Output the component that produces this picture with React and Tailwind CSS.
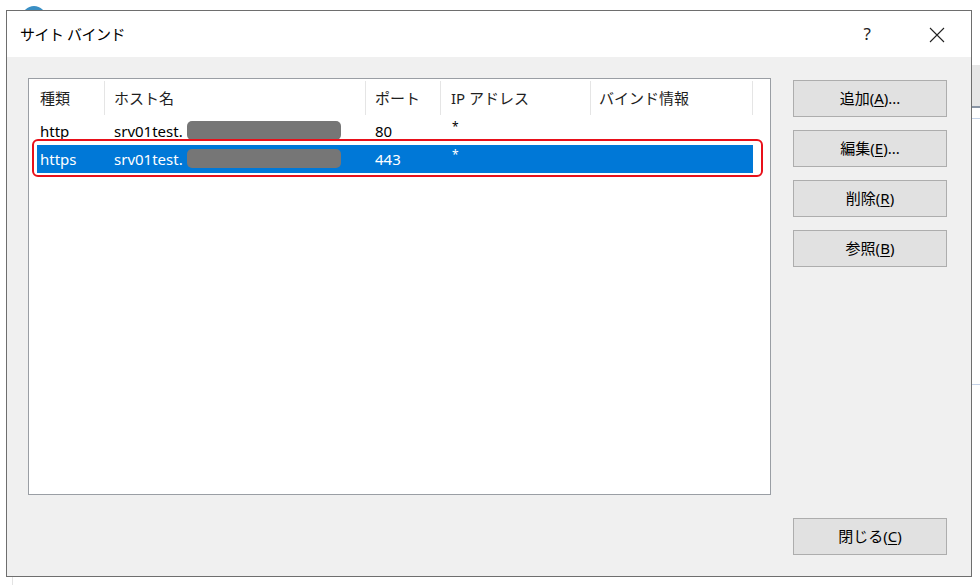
import React from "react";

const font = { fontFamily: '"Noto Sans", "Noto Sans CJK JP", sans-serif' };

function Btn({ label, k, tail = "" }) {
  return (
    <button className="w-[154px] h-[37px] bg-[#e1e1e1] border border-[#adadad] text-[15px] text-black flex items-center justify-center leading-none">
      <span>
        {label}(<span className="underline underline-offset-2">{k}</span>){tail}
      </span>
    </button>
  );
}

function Redact({ top }) {
  return (
    <div
      className={`absolute left-[82px] w-[154px] h-[19px] rounded-[5px] bg-[#767676] ${top}`}
    />
  );
}

export default function App() {
  return (
    <div className="relative w-[980px] h-[585px] bg-white overflow-hidden text-black" style={font}>
      {/* background window pieces */}
      <svg className="absolute left-[20px] top-[4px]" width="28" height="28" viewBox="0 0 28 28">
        <circle cx="14" cy="14" r="12" fill="#3a8fc4" />
        <path d="M4 10 Q14 2 24 10 L24 14 L4 14 Z" fill="#5aa86b" />
      </svg>
      <div className="absolute left-[972px] top-[65px] w-[8px] h-[43px] bg-[#e6e6e6] border-b-2 border-[#8a95a5]" />
      <div className="absolute left-[972px] top-[118px] w-[8px] h-px bg-[#c5d3e8]" />
      <div className="absolute left-[972px] top-[384px] w-[8px] h-px bg-[#c5d3e8]" />
      <div className="absolute left-[12px] top-[577px] w-px h-[8px] bg-[#e3e3e3]" />

      {/* dialog */}
      <div className="relative ml-[6px] mt-[10px] w-[966px] h-[567px] border border-[#6e6e6e] flex flex-col bg-[#f0f0f0]">
        <div className="h-[46px] bg-white flex items-center pl-[13px] pr-[26px] text-[15px]">
          <span className="flex-1 tracking-[-0.5px]">サイト バインド</span>
          <span className="mr-[58px] text-[17px] text-[#222]">?</span>
          <svg width="16" height="16" viewBox="0 0 16 16" className="mt-px">
            <path d="M1 1 L15 15 M15 1 L1 15" stroke="#222" strokeWidth="1.1" />
          </svg>
        </div>

        <div className="flex-1 flex pl-[21px] pt-[21px]">
          {/* list */}
          <div className="relative w-[743px] h-[417px] bg-white border border-[#9a9ea4] text-[15px]">
            <div className="grid grid-cols-[76px_261px_75px_150px_162px] h-[38px] text-[#1e1e1e]">
              <div className="pl-[11px] flex items-center border-r border-[#e5e5e5] my-[2px]">種類</div>
              <div className="pl-[9px] flex items-center border-r border-[#e5e5e5] my-[2px]">ホスト名</div>
              <div className="pl-[9px] flex items-center border-r border-[#e5e5e5] my-[2px]">ポート</div>
              <div className="pl-[10px] flex items-center border-r border-[#e5e5e5] my-[2px]">IP アドレス</div>
              <div className="pl-[8px] flex items-center border-r border-[#e5e5e5] my-[2px]">バインド情報</div>
            </div>

            <div className="grid grid-cols-[76px_261px_75px_150px_162px] h-[28px] items-center">
              <div className="pl-[11px]">http</div>
              <div className="relative pl-[9px] h-full flex items-center">
                srv01test.
                <Redact top="top-[4px]" />
              </div>
              <div className="pl-[9px]">80</div>
              <div className="pl-[11px] text-[12px] -mt-[8px]">*</div>
              <div />
            </div>

            <div className="ml-[8px] w-[716px] grid grid-cols-[68px_261px_75px_150px_162px] h-[28px] items-center bg-[#0078d7] text-white">
              <div className="pl-[3px]">https</div>
              <div className="relative pl-[9px] h-full flex items-center">
                srv01test.
                <Redact top="top-[4px]" />
              </div>
              <div className="pl-[9px]">443</div>
              <div className="pl-[11px] text-[12px] -mt-[8px]">*</div>
              <div />
            </div>

            <div className="absolute left-[3px] top-[60px] w-[731px] h-[38px] border-2 border-[#e8101a] rounded-[6px]" />
          </div>

          {/* buttons */}
          <div className="ml-[22px] pt-[2px] flex flex-col">
            <div className="flex flex-col gap-[13px]">
              <Btn label="追加" k="A" tail="..." />
              <Btn label="編集" k="E" tail="..." />
              <Btn label="削除" k="R" />
              <Btn label="参照" k="B" />
            </div>
            <div className="mt-[251px]">
              <Btn label="閉じる" k="C" />
            </div>
          </div>
        </div>
      </div>
    </div>
  );
}
